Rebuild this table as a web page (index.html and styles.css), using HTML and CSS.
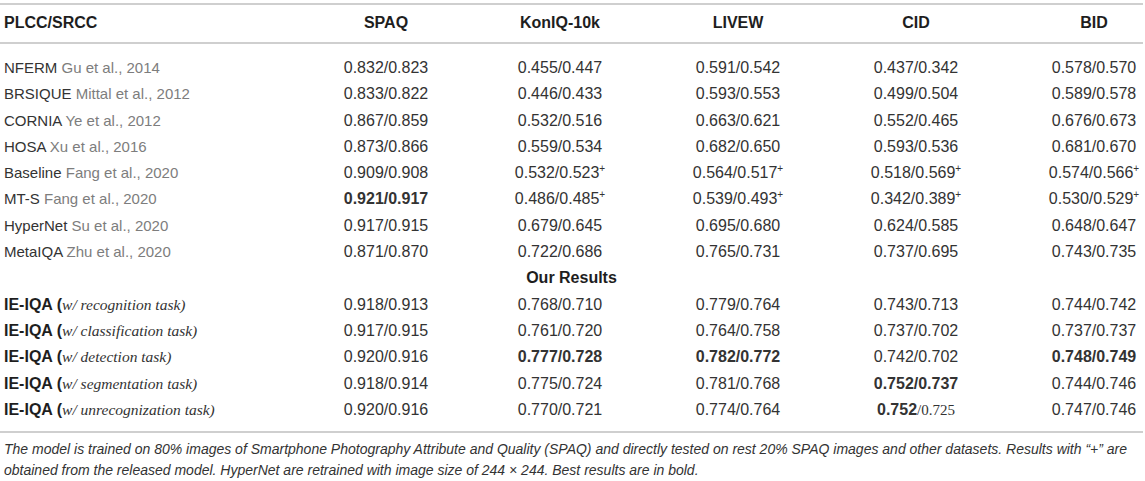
FILE: index.html
```html
<!DOCTYPE html>
<html lang="en">
<head>
    <meta charset="UTF-8">
    <title>PLCC/SRCC results</title>
    <link rel="stylesheet" href="styles.css">
</head>
<body>
    <div class="table-wrap">
        <table class="results">
            <colgroup>
                <col class="col-method">
                <col class="col-spaq">
                <col class="col-data">
                <col class="col-data">
                <col class="col-data">
                <col class="col-last">
            </colgroup>
            <thead>
                <tr>
                    <th class="method">PLCC/SRCC</th>
                    <th>SPAQ</th>
                    <th>KonIQ-10k</th>
                    <th>LIVEW</th>
                    <th>CID</th>
                    <th class="last">BID</th>
                </tr>
            </thead>
            <tbody>
                <tr>
                    <td class="method">NFERM <span class="cite">Gu et al., 2014</span></td>
                    <td>0.832/0.823</td>
                    <td>0.455/0.447</td>
                    <td>0.591/0.542</td>
                    <td>0.437/0.342</td>
                    <td class="last">0.578/0.570</td>
                </tr>
                <tr>
                    <td class="method">BRSIQUE <span class="cite">Mittal et al., 2012</span></td>
                    <td>0.833/0.822</td>
                    <td>0.446/0.433</td>
                    <td>0.593/0.553</td>
                    <td>0.499/0.504</td>
                    <td class="last">0.589/0.578</td>
                </tr>
                <tr>
                    <td class="method">CORNIA <span class="cite">Ye et al., 2012</span></td>
                    <td>0.867/0.859</td>
                    <td>0.532/0.516</td>
                    <td>0.663/0.621</td>
                    <td>0.552/0.465</td>
                    <td class="last">0.676/0.673</td>
                </tr>
                <tr>
                    <td class="method">HOSA <span class="cite">Xu et al., 2016</span></td>
                    <td>0.873/0.866</td>
                    <td>0.559/0.534</td>
                    <td>0.682/0.650</td>
                    <td>0.593/0.536</td>
                    <td class="last">0.681/0.670</td>
                </tr>
                <tr>
                    <td class="method">Baseline <span class="cite">Fang et al., 2020</span></td>
                    <td>0.909/0.908</td>
                    <td>0.532/0.523<sup class="plus">+</sup></td>
                    <td>0.564/0.517<sup class="plus">+</sup></td>
                    <td>0.518/0.569<sup class="plus">+</sup></td>
                    <td class="last">0.574/0.566<sup class="plus">+</sup></td>
                </tr>
                <tr>
                    <td class="method">MT-S <span class="cite">Fang et al., 2020</span></td>
                    <td><b>0.921/0.917</b></td>
                    <td>0.486/0.485<sup class="plus">+</sup></td>
                    <td>0.539/0.493<sup class="plus">+</sup></td>
                    <td>0.342/0.389<sup class="plus">+</sup></td>
                    <td class="last">0.530/0.529<sup class="plus">+</sup></td>
                </tr>
                <tr>
                    <td class="method">HyperNet <span class="cite">Su et al., 2020</span></td>
                    <td>0.917/0.915</td>
                    <td>0.679/0.645</td>
                    <td>0.695/0.680</td>
                    <td>0.624/0.585</td>
                    <td class="last">0.648/0.647</td>
                </tr>
                <tr>
                    <td class="method">MetaIQA <span class="cite">Zhu et al., 2020</span></td>
                    <td>0.871/0.870</td>
                    <td>0.722/0.686</td>
                    <td>0.765/0.731</td>
                    <td>0.737/0.695</td>
                    <td class="last">0.743/0.735</td>
                </tr>
                <tr>
                    <td colspan="6" class="section">Our Results</td>
                </tr>
                <tr>
                    <td class="method"><b>IE-IQA (</b><i class="task">w/ recognition task)</i></td>
                    <td>0.918/0.913</td>
                    <td>0.768/0.710</td>
                    <td>0.779/0.764</td>
                    <td>0.743/0.713</td>
                    <td class="last">0.744/0.742</td>
                </tr>
                <tr>
                    <td class="method"><b>IE-IQA (</b><i class="task">w/ classification task)</i></td>
                    <td>0.917/0.915</td>
                    <td>0.761/0.720</td>
                    <td>0.764/0.758</td>
                    <td>0.737/0.702</td>
                    <td class="last">0.737/0.737</td>
                </tr>
                <tr>
                    <td class="method"><b>IE-IQA (</b><i class="task">w/ detection task)</i></td>
                    <td>0.920/0.916</td>
                    <td><b>0.777/0.728</b></td>
                    <td><b>0.782/0.772</b></td>
                    <td>0.742/0.702</td>
                    <td class="last"><b>0.748/0.749</b></td>
                </tr>
                <tr>
                    <td class="method"><b>IE-IQA (</b><i class="task">w/ segmentation task)</i></td>
                    <td>0.918/0.914</td>
                    <td>0.775/0.724</td>
                    <td>0.781/0.768</td>
                    <td><b>0.752/0.737</b></td>
                    <td class="last">0.744/0.746</td>
                </tr>
                <tr class="last-row">
                    <td class="method"><b>IE-IQA (</b><i class="task">w/ unrecognization task)</i></td>
                    <td>0.920/0.916</td>
                    <td>0.770/0.721</td>
                    <td>0.774/0.764</td>
                    <td><b>0.752</b><span class="serif">/0.725</span></td>
                    <td class="last">0.747/0.746</td>
                </tr>
            </tbody>
        </table>
        <p class="note">The model is trained on 80% images of Smartphone Photography Attribute and Quality (SPAQ) and directly tested on rest 20% SPAQ images and other datasets. Results with “+” are obtained from the released model. HyperNet are retrained with image size of 244 × 244. Best results are in bold.</p>
    </div>
</body>
</html>
```

FILE: styles.css
```css
* {
    margin: 0;
    padding: 0;
    box-sizing: border-box;
}

body {
    background-color: white;
    font-family: "Liberation Sans", Arial, sans-serif;
    color: #333;
}

.table-wrap {
    width: 1143px;
    padding-top: 3px;
}

/* Results table */
.results {
    width: 1143px;
    border-collapse: collapse;
    table-layout: fixed;
    font-size: 16px;
}

.col-method { width: 301px; }
.col-spaq { width: 170px; }
.col-data { width: 178px; }
.col-last { width: 138px; }

.results th,
.results td {
    text-align: center;
    white-space: nowrap;
    padding: 0 4px;
}

.results thead th {
    font-weight: bold;
    color: #1e1e1e;
    line-height: 20px;
    padding-top: 8px;
    padding-bottom: 9px;
    border-top: 2px solid #cfcfcf;
    border-bottom: 2px solid #cfcfcf;
}

.results td {
    line-height: 26.3px;
}

.results td.method {
    font-size: 15px;
}

.results .method {
    text-align: left;
}

.results .last {
    padding-left: 40px;
    padding-right: 0;
}

.results tbody tr:first-child td {
    padding-top: 11px;
}

.results .last-row td {
    padding-bottom: 8px;
    border-bottom: 2px solid #cfcfcf;
}

.method b {
    font-size: 16px;
    color: #1e1e1e;
}

.cite {
    color: #7d7d7d;
}

.section {
    font-weight: bold;
    color: #1e1e1e;
}

.task {
    font-family: "Liberation Serif", "Times New Roman", serif;
    font-size: 15.5px;
}

.serif {
    font-family: "Liberation Serif", "Times New Roman", serif;
    font-size: 15px;
}

.plus {
    font-size: 10px;
    line-height: 0;
    vertical-align: 6px;
}

/* Footnote */
.note {
    font-size: 14px;
    font-style: italic;
    line-height: 21px;
    color: #333;
    padding: 6px 4px 0;
}
```
